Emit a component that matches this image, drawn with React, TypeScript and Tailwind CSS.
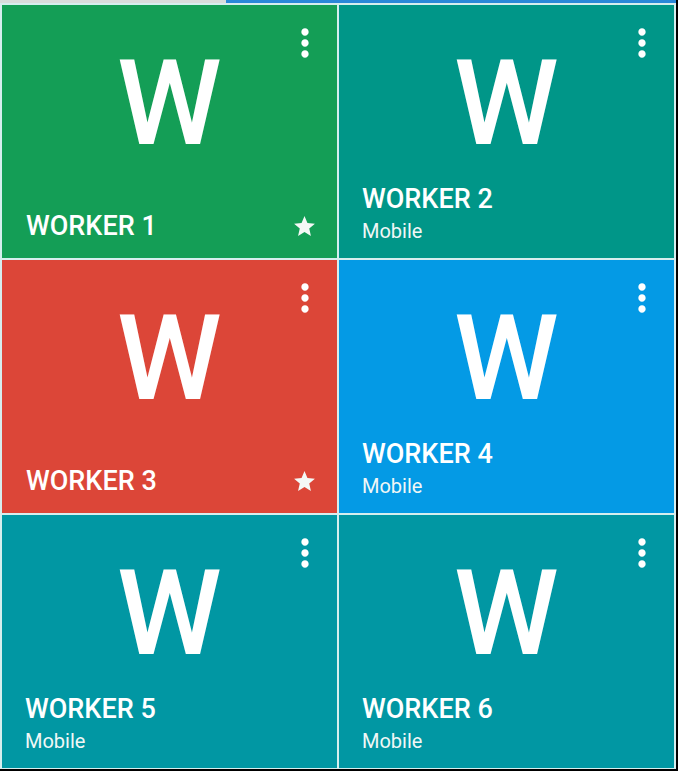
import React from "react";

type Tile = { name: string; color: string; starred: boolean };

const tiles: Tile[] = [
  { name: "WORKER 1", color: "bg-[#149e56]", starred: true },
  { name: "WORKER 2", color: "bg-[#009688]", starred: false },
  { name: "WORKER 3", color: "bg-[#dc4638]", starred: true },
  { name: "WORKER 4", color: "bg-[#049ae5]", starred: false },
  { name: "WORKER 5", color: "bg-[#0197a3]", starred: false },
  { name: "WORKER 6", color: "bg-[#0197a3]", starred: false },
];

function MoreVert() {
  return (
    <svg width="44" height="44" viewBox="0 0 24 24" fill="#ffffff">
      <path d="M12 8c1.1 0 2-.9 2-2s-.9-2-2-2-2 .9-2 2 .9 2 2 2zm0 2c-1.1 0-2 .9-2 2s.9 2 2 2 2-.9 2-2-.9-2-2-2zm0 6c-1.1 0-2 .9-2 2s.9 2 2 2 2-.9 2-2-.9-2-2-2z" />
    </svg>
  );
}

function Star() {
  return (
    <svg width="25" height="25" viewBox="0 0 24 24" fill="#f4f8f6">
      <path d="M12 17.27L18.18 21l-1.64-7.03L22 9.24l-7.19-.61L12 2 9.19 8.63 2 9.24l5.46 4.73L5.82 21z" />
    </svg>
  );
}

function WorkerTile({ t }: { t: Tile }) {
  return (
    <div className={`relative flex flex-col ${t.color} text-white overflow-hidden`}>
      <div className="absolute top-[16px] right-[10px]">
        <MoreVert />
      </div>
      <div className="pt-[39px] text-center text-[119px] leading-none font-medium">W</div>
      <div className="flex-1" />
      {t.starred ? (
        <div className="flex items-center justify-between pl-[24px] pr-[20px] pb-[17px]">
          <div className="text-[27px] leading-[30px] font-medium">{t.name}</div>
          <Star />
        </div>
      ) : (
        <div className="flex flex-col pl-[23px] pb-[15px]">
          <div className="text-[27px] leading-[30px] font-medium">{t.name}</div>
          <div className="mt-[5px] text-[20px] leading-[24px] text-[#f1f7f6]">Mobile</div>
        </div>
      )}
    </div>
  );
}

export default function App() {
  return (
    <div className="w-[678px] h-[771px] bg-black font-['Roboto',sans-serif]">
      <div className="w-[676px] h-[769px] flex flex-col bg-[#d6eeee]">
        <div className="flex h-[3px]">
          <div className="w-[226px] bg-[#d9dcdc]" />
          <div className="flex-1 bg-[#2a88d8]" />
        </div>
        <div className="flex-1 grid grid-cols-2 grid-rows-3 gap-[2px] pt-[2px] pb-[1px] px-[2px]">
          {tiles.map((t) => (
            <WorkerTile key={t.name} t={t} />
          ))}
        </div>
      </div>
    </div>
  );
}
